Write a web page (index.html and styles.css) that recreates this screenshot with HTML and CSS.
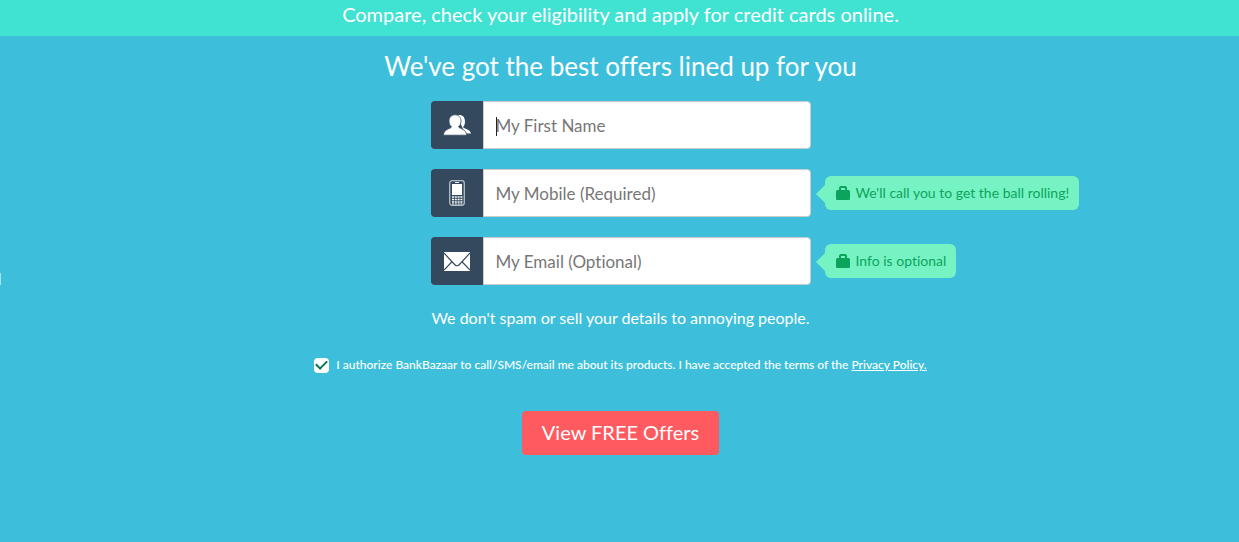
FILE: index.html
```html
<!DOCTYPE html>
<html lang="en">
<head>
<meta charset="utf-8">
<meta name="viewport" content="width=device-width, initial-scale=1">
<title>Credit card offers</title>
<link rel="stylesheet" href="styles.css">
</head>
<body>
<header class="banner">Compare, check your eligibility and apply for credit cards online.</header>
<main class="offers">
  <h1 class="title">We've got the best offers lined up for you</h1>
  <form class="form">
    <div class="field">
      <label class="field-icon" for="name" aria-label="My First Name">
        <svg width="28" height="22" viewBox="0 0 28 22"><path fill="#fff" d="M14 1.500c4-1.500 8 .5 8 6 0 3-1 4.500-2 5.500 1 2 7 2 8 6.500h-6z"/><path fill="#fff" stroke="#34495e" stroke-width=".8" d="M12 .8C8.500.8 6 3.500 6 7c0 3 1 4.500 2.500 5.800C8 15 1 14.500.3 21.200h23.400C23 14.500 16.500 15 15.500 12.800 17 11.500 18 10 18 7c0-3.500-2.500-6.200-6-6.200z"/></svg>
      </label>
      <input class="input" id="name" type="text" placeholder="My First Name">
      <span class="caret"></span>
    </div>
    <div class="field">
      <label class="field-icon" for="mobile" aria-label="My Mobile">
        <svg width="16" height="26" viewBox="0 0 16 26"><rect x=".7" y=".7" width="14.600" height="24.600" rx="2.500" fill="none" stroke="#b4bcc4" stroke-width="1.300"/><path fill="#fff" d="M6 2h4v1H6zM3 4h10v11H3z"/><path fill="none" stroke="#fff" stroke-width="1.600" stroke-dasharray="2 .8" d="M3 17h10.500M3 19.500h10.500M3 22h10.500"/><path stroke="#fff" stroke-dasharray="2 .8" d="M3 24h10.500"/></svg>
      </label>
      <input class="input" id="mobile" type="tel" placeholder="My Mobile (Required)">
      <div class="hint"><svg width="14" height="14" viewBox="0 0 14 14"><path fill="#0ca35d" fill-rule="evenodd" d="M3 4V2q0-2 2-2h4q2 0 2 2v2h1.500q1.500 0 1.500 1.500V13q0 1-1 1H1q-1 0-1-1V5.500Q0 4 1.500 4zM5 4h4V2H5z"/></svg>We'll call you to get the ball rolling!</div>
    </div>
    <div class="field">
      <label class="field-icon" for="email" aria-label="My Email">
        <svg width="26" height="19" viewBox="0 0 27 19" preserveAspectRatio="none"><path fill="#fff" d="M0 0h27v19H0z"/><path fill="none" stroke="#34495e" stroke-width="1.200" d="M0 1l10.500 11q3 3.500 6 0L27 1M0 18l8-8M27 18l-8-8"/></svg>
      </label>
      <input class="input" id="email" type="email" placeholder="My Email (Optional)">
      <div class="hint"><svg width="14" height="14" viewBox="0 0 14 14"><path fill="#0ca35d" fill-rule="evenodd" d="M3 4V2q0-2 2-2h4q2 0 2 2v2h1.500q1.500 0 1.500 1.500V13q0 1-1 1H1q-1 0-1-1V5.500Q0 4 1.500 4zM5 4h4V2H5z"/></svg>Info is optional</div>
    </div>
    <p class="note">We don't spam or sell your details to annoying people.</p>
    <div class="consent">
      <input class="check" id="agree" type="checkbox" checked>
      <label for="agree">I authorize BankBazaar to call/SMS/email me about its products. I have accepted the terms of the <a class="link" href="#">Privacy Policy.</a></label>
    </div>
    <button class="submit" type="button">View FREE Offers</button>
  </form>
  <span class="edge-handle"></span>
</main>
</body>
</html>
```
FILE: styles.css
```css
* {
  box-sizing: border-box;
}

body {
  display: flex;
  flex-direction: column;
  min-height: 100vh;
  margin: 0;
  background: #3dbfdb;
  color: #fff;
  font-family: Lato, "Liberation Sans", sans-serif;
  font-variant-ligatures: none;
}

.banner {
  padding: 0 0 8px 2px;
  background: #40e2d2;
  font-size: 20px;
  line-height: 28px;
  text-align: center;
}

.offers {
  position: relative;
  flex: 1;
  padding: 12px 0 40px 2px;
}

.title {
  margin: 0 0 17px;
  font-size: 26px;
  font-weight: 400;
  line-height: 36px;
  text-align: center;
}

.form {
  display: flex;
  flex-direction: column;
  align-items: center;
}

.field {
  position: relative;
  display: flex;
  width: 380px;
  max-width: 100%;
  height: 48px;
  margin-bottom: 20px;
}

.field-icon {
  display: flex;
  flex: 0 0 52px;
  align-items: center;
  justify-content: center;
  border-radius: 4px 0 0 4px;
  background: #34495e;
}

.input {
  flex: 1;
  min-width: 0;
  padding: 0 12px;
  border: 1px solid #ccc;
  border-radius: 0 4px 4px 0;
  outline: 0;
  background: #fff;
  color: #333;
  font: 17px Lato, "Liberation Sans", sans-serif;
  font-variant-ligatures: none;
}

.input::placeholder {
  color: #777;
}

.caret {
  position: absolute;
  top: 16px;
  left: 65px;
  width: 1px;
  height: 19px;
  background: #222;
}

.hint {
  position: absolute;
  top: 7px;
  left: calc(100% + 14px);
  display: flex;
  align-items: center;
  gap: 6px;
  height: 34px;
  padding: 0 10px 0 11px;
  border-radius: 6px;
  background: #76f3c2;
  color: #0ca35d;
  font-size: 14px;
  line-height: 16px;
  white-space: nowrap;
}

.hint::before {
  position: absolute;
  top: 9px;
  left: -9px;
  border: solid transparent;
  border-width: 9px 9px 9px 0;
  border-right-color: #76f3c2;
  content: "";
}

.note {
  margin: 0;
  font-size: 16px;
  line-height: 26px;
}

.consent {
  display: flex;
  align-items: center;
  gap: 7px;
  margin: 24px 0 36px;
  font-size: 12px;
  font-weight: 500;
  line-height: 20px;
}

.check {
  display: grid;
  place-items: center;
  width: 15px;
  height: 15px;
  margin: 0;
  border-radius: 4px;
  background: #fff;
  appearance: none;
}

.check:checked::before {
  width: 9px;
  height: 5px;
  margin-bottom: 3px;
  border: solid #08745c;
  border-width: 0 0 2px 2px;
  transform: rotate(-45deg);
  content: "";
}

.link {
  color: inherit;
}

.submit {
  height: 44px;
  padding: 0 20px 2px;
  border: 0;
  border-radius: 4px;
  background: #ff5a5f;
  color: #fff;
  font: 20px Lato, "Liberation Sans", sans-serif;
  font-variant-ligatures: none;
}

.edge-handle {
  position: absolute;
  top: 237px;
  left: 0;
  width: 1px;
  height: 12px;
  background: #a5e0ec;
}
```
